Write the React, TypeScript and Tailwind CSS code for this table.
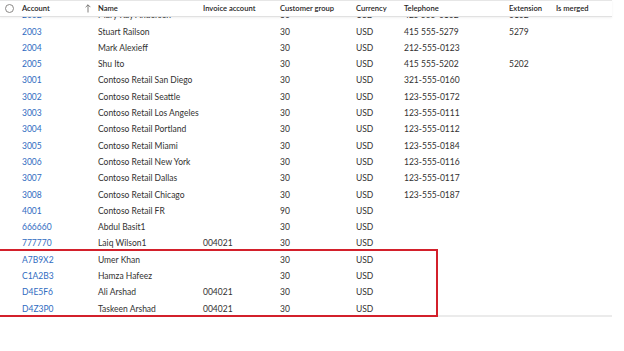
import React from "react";

type Row = [string, string, string, string, string, string, string];

const rows: Row[] = [
  ["2002", "Mary Kay Andersen", "", "30", "USD", "425 555-0102", "0102"],
  ["2003", "Stuart Railson", "", "30", "USD", "415 555-5279", "5279"],
  ["2004", "Mark Alexieff", "", "30", "USD", "212-555-0123", ""],
  ["2005", "Shu Ito", "", "30", "USD", "415 555-5202", "5202"],
  ["3001", "Contoso Retail San Diego", "", "30", "USD", "321-555-0160", ""],
  ["3002", "Contoso Retail Seattle", "", "30", "USD", "123-555-0172", ""],
  ["3003", "Contoso Retail Los Angeles", "", "30", "USD", "123-555-0111", ""],
  ["3004", "Contoso Retail Portland", "", "30", "USD", "123-555-0112", ""],
  ["3005", "Contoso Retail Miami", "", "30", "USD", "123-555-0184", ""],
  ["3006", "Contoso Retail New York", "", "30", "USD", "123-555-0116", ""],
  ["3007", "Contoso Retail Dallas", "", "30", "USD", "123-555-0117", ""],
  ["3008", "Contoso Retail Chicago", "", "30", "USD", "123-555-0187", ""],
  ["4001", "Contoso Retail FR", "", "90", "USD", "", ""],
  ["666660", "Abdul Basit1", "", "30", "USD", "", ""],
  ["777770", "Laiq Wilson1", "004021", "30", "USD", "", ""],
  ["A7B9X2", "Umer Khan", "", "30", "USD", "", ""],
  ["C1A2B3", "Hamza Hafeez", "", "30", "USD", "", ""],
  ["D4E5F6", "Ali Arshad", "004021", "30", "USD", "", ""],
  ["D4Z3P0", "Taskeen Arshad", "004021", "30", "USD", "", ""],
];

const cols = "grid grid-cols-[22px_76px_105px_77px_76px_48px_105px_47px_56px]";

export default function App() {
  return (
    <div
      className="relative w-[624px] h-[351px] bg-white overflow-hidden text-[8.5px] text-[#323130]"
      style={{ fontFamily: "Lato, 'Open Sans', sans-serif" }}
    >
      <div className="relative w-[612px]">
        {/* header */}
        <div
          className={`${cols} relative z-10 h-[17px] items-center bg-white border-t border-[#e6e6e6] border-b border-b-[#e1e1e1] shadow-[0_1px_2px_rgba(0,0,0,0.06)] font-semibold text-[7.6px] text-[#252423]`}
        >
          <div className="flex items-center pl-[5px]">
            <div className="w-[9px] h-[9px] rounded-full border border-[#8a8886]" />
          </div>
          <div className="flex items-center justify-between pr-[7px]">
            <span>Account</span>
            <svg width="6" height="9" viewBox="0 0 6 9" fill="none" stroke="#605e5c" strokeWidth="0.8">
              <path d="M3 8.5V0.8M0.6 3.2L3 0.8L5.4 3.2" />
            </svg>
          </div>
          <div>Name</div>
          <div>Invoice account</div>
          <div>Customer group</div>
          <div>Currency</div>
          <div>Telephone</div>
          <div>Extension</div>
          <div>Is merged</div>
        </div>
        {/* body */}
        <div className="h-[300px] overflow-hidden border-b-2 border-[#ebebeb]">
          <div className="-mt-[9.5px]">
            {rows.map((r) => (
              <div key={r[0]} className={`${cols} h-[16.3px] items-center`}>
                <div />
                <div className="text-[#2f6bc1]">{r[0]}</div>
                <div>{r[1]}</div>
                <div>{r[2]}</div>
                <div>{r[3]}</div>
                <div>{r[4]}</div>
                <div>{r[5]}</div>
                <div>{r[6]}</div>
                <div />
              </div>
            ))}
          </div>
        </div>
        {/* highlight */}
        <div className="absolute left-[-4px] top-[249px] w-[442px] h-[67.5px] border-2 border-[#d3202b] pointer-events-none" />
      </div>
    </div>
  );
}
